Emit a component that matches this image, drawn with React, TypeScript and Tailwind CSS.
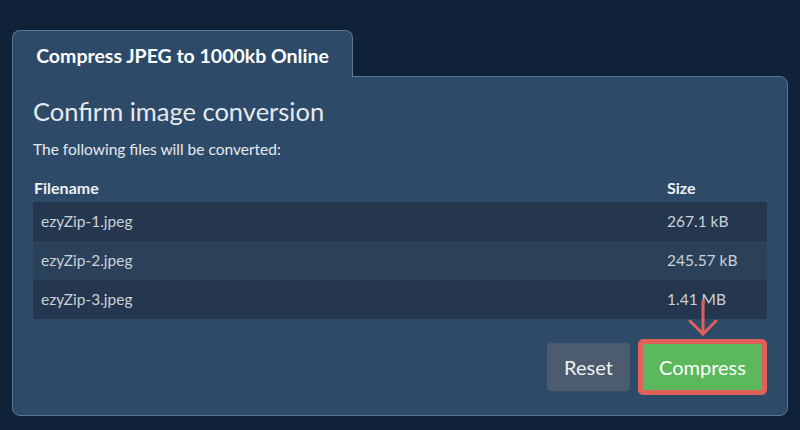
const files = [
  { name: 'ezyZip-1.jpeg', size: '267.1 kB' },
  { name: 'ezyZip-2.jpeg', size: '245.57 kB' },
  { name: 'ezyZip-3.jpeg', size: '1.41 MB' },
];

export default function App() {
  return (
    <div className="h-[430px] w-[800px] overflow-hidden bg-[#10223a] px-[12px] pt-[30px] font-['Lato',sans-serif]">
      {/* tab */}
      <div className="relative z-10 -mb-px flex h-[47px] w-[341px] items-center justify-center rounded-t-lg border border-b-0 border-[#5b7696] bg-[#2d4a69] pt-[4px] text-[19.5px] font-bold text-white">
        Compress JPEG to 1000kb Online
      </div>

      {/* panel */}
      <div className="h-[340px] w-[776px] rounded-b-lg rounded-tr-lg border border-[#5b7696] bg-[#2d4a69] px-[20px] pt-[18px]">
        <h2 className="text-[25.5px] leading-[32px] text-[#e6eaee]">Confirm image conversion</h2>
        <p className="mt-[12px] text-[15.5px] leading-[20px] text-[#e6eaee]">The following files will be converted:</p>

        <div className="mt-[15px]">
          <div className="flex h-[28px] items-center text-[16px] font-bold text-[#eef1f4]">
            <div className="flex-1 pl-px">Filename</div>
            <div className="w-[100px]">Size</div>
          </div>
          {files.map((f, i) => (
            <div
              key={f.name}
              className={`flex h-[39px] items-center text-[15.5px] text-[#c9d1da] ${i % 2 === 1 ? 'bg-[#2b4159]' : 'bg-[#25374f]'}`}
            >
              <div className="flex-1 pl-[8px]">{f.name}</div>
              <div className="w-[100px]">{f.size}</div>
            </div>
          ))}
        </div>

        <div className="mt-[20px] flex items-center justify-end gap-[8px]">
          <button className="h-[48px] w-[83px] rounded-[4px] bg-[#4c5c6e] text-[20px] text-[#eef0f2]">Reset</button>
          <div className="relative">
            <svg
              className="absolute left-1/2 top-[-40px] -translate-x-1/2"
              width="32"
              height="38"
              viewBox="0 0 32 38"
              fill="none"
              stroke="#e0605a"
              strokeWidth="3"
              strokeLinecap="round"
              strokeLinejoin="round"
            >
              <path d="M16 2 L16 35" />
              <path d="M3 22 L16 35 L29 22" />
            </svg>
            <button className="h-[56px] w-[129px] rounded-[5px] border-[5px] border-[#e0605a] bg-[#5cb85c] text-[20px] text-white">
              Compress
            </button>
          </div>
        </div>
      </div>
    </div>
  );
}
